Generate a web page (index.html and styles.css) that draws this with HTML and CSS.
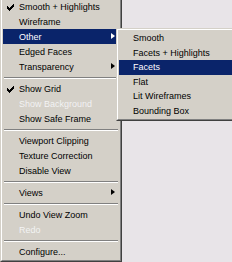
FILE: index.html
```html
<!DOCTYPE html>
<html>
<head>
<meta charset="utf-8">
<link rel="stylesheet" href="styles.css">
</head>
<body>
<div class="desk">
  <div class="menu main">
    <div class="menu-in">
      <div class="item"><svg class="chk" width="7" height="7" viewBox="0 0 7 7"><path d="M0 2h1v1h1v1h1v-1h1v-1h1v-1h1v-1h1v3h-1v1h-1v1h-1v1h-1v1h-1v-1h-1v-1h-1z" fill="#000"/></svg><span>Smooth + Highlights</span></div>
      <div class="item"><span>Wireframe</span></div>
      <div class="item hl"><span>Other</span><i class="arrow"></i></div>
      <div class="item"><span>Edged Faces</span></div>
      <div class="item"><span>Transparency</span><i class="arrow"></i></div>
      <div class="sep"></div>
      <div class="item"><svg class="chk" width="7" height="7" viewBox="0 0 7 7"><path d="M0 2h1v1h1v1h1v-1h1v-1h1v-1h1v-1h1v3h-1v1h-1v1h-1v1h-1v1h-1v-1h-1v-1h-1z" fill="#000"/></svg><span>Show Grid</span></div>
      <div class="item dis"><span>Show Background</span></div>
      <div class="item"><span>Show Safe Frame</span></div>
      <div class="sep"></div>
      <div class="item"><span>Viewport Clipping</span></div>
      <div class="item"><span>Texture Correction</span></div>
      <div class="item"><span>Disable View</span></div>
      <div class="sep"></div>
      <div class="item"><span>Views</span><i class="arrow"></i></div>
      <div class="sep"></div>
      <div class="item"><span>Undo View Zoom</span></div>
      <div class="item dis"><span>Redo</span></div>
      <div class="sep"></div>
      <div class="item"><span>Configure...</span></div>
    </div>
  </div>
  <div class="menu sub">
    <div class="menu-in">
      <div class="item"><span>Smooth</span></div>
      <div class="item"><span>Facets + Highlights</span></div>
      <div class="item hl"><span>Facets</span></div>
      <div class="item"><span>Flat</span></div>
      <div class="item"><span>Lit Wireframes</span></div>
      <div class="item"><span>Bounding Box</span></div>
    </div>
  </div>
</div>
</body>
</html>
```

FILE: styles.css
```css
html, body {
  margin: 0;
  padding: 0;
}
body {
  background: #e8e4e8;
  font-family: "Liberation Sans", Arial, sans-serif;
  font-size: 9px;
  color: #000;
}
.desk {
  position: relative;
  width: 232px;
  height: 262px;
  overflow: hidden;
}
.menu {
  position: absolute;
  background: #d4d0c8;
  border: 1px solid;
  border-color: #d4d0c8 #404040 #404040 #d4d0c8;
  box-sizing: border-box;
}
.menu-in {
  border: 1px solid;
  border-color: #fff #808080 #808080 #fff;
  padding: 1px;
}
.main {
  left: 0;
  top: -4px;
  width: 122px;
}
.sub {
  left: 116px;
  top: 28px;
  width: 140px;
}
.item {
  position: relative;
  height: 15px;
  display: flex;
  align-items: center;
  padding-left: 16px;
  white-space: nowrap;
}
.sub .item {
  height: 14.5px;
  padding-left: 14px;
}
.item.hl {
  background: #0a246a;
  color: #fff;
}
.item.dis {
  color: #f6f6f6;
  text-shadow: 0 0 0 rgba(160, 160, 160, 0.25);
}
.chk {
  position: absolute;
  left: 4px;
  top: 5px;
}
.arrow {
  position: absolute;
  right: 4px;
  top: 4px;
  width: 0;
  height: 0;
  border-top: 3.5px solid transparent;
  border-bottom: 3.5px solid transparent;
  border-left: 4px solid #000;
}
.item.hl .arrow {
  border-left-color: #fff;
}
.sep {
  height: 7px;
  display: flex;
  align-items: center;
  padding: 0 1px;
}
.sep::before {
  content: "";
  flex: 1;
  height: 0;
  border-top: 1px solid #808080;
  border-bottom: 1px solid #fff;
}
```
